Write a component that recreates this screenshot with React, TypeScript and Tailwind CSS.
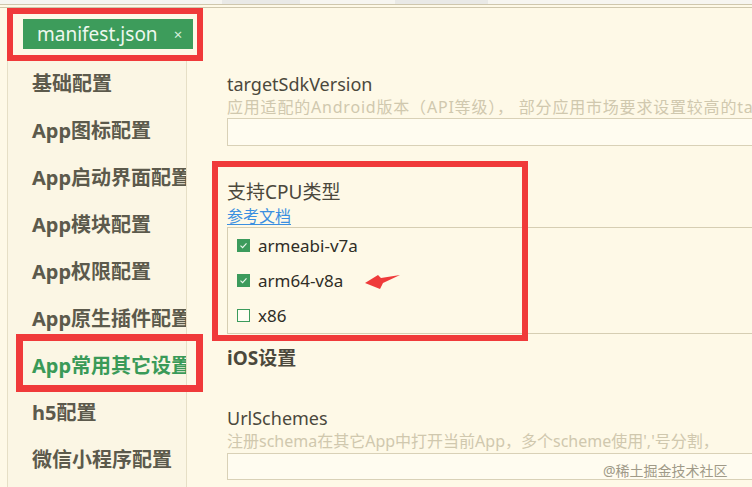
import React from 'react';

const navItems = [
  '基础配置',
  'App图标配置',
  'App启动界面配置',
  'App模块配置',
  'App权限配置',
  'App原生插件配置',
  'App常用其它设置',
  'h5配置',
  '微信小程序配置',
];

const cpuTypes = [
  { name: 'armeabi-v7a', checked: true },
  { name: 'arm64-v8a', checked: true },
  { name: 'x86', checked: false },
];

const Check = ({ checked }: { checked: boolean }) =>
  checked ? (
    <span className="w-[13px] h-[13px] bg-[#3c9b5c] flex items-center justify-center shrink-0">
      <svg width="9" height="9" viewBox="0 0 9 9">
        <path d="M1.5 4.6 L3.6 6.6 L7.5 2.4" fill="none" stroke="#e9f6ec" strokeWidth="1.2" />
      </svg>
    </span>
  ) : (
    <span className="w-[13px] h-[13px] border border-[#3c9b5c] bg-[#fffdf3] shrink-0" />
  );

export default function App() {
  return (
    <div
      className="relative w-[752px] h-[487px] overflow-hidden bg-[#fef9e7] text-[#4b483c]"
      style={{ fontFamily: '"Noto Sans", "Noto Sans CJK SC", sans-serif' }}
    >
      {/* top tab strip */}
      <div className="h-[4px] bg-[#f6f5f0] flex">
        <div className="ml-[222px] w-[78px] bg-[#e9e9e6]" />
        <div className="ml-[95px] w-[93px] bg-[#e9e9e6]" />
      </div>
      <div className="h-[4px] border-y border-[#cfc7ad]" />

      {/* file tab row */}
      <div className="h-[52px] pt-[11px] pl-[23px]">
        <div className="w-[170px] h-[30px] bg-[#3d9c5b] flex items-center pl-[14px] text-[#eef8ef]">
          <span className="text-[19px] leading-none">manifest.json</span>
          <span className="ml-[16px] text-[15px] leading-none text-[#d6efdb]">×</span>
        </div>
      </div>

      <div className="flex">
        {/* sidebar */}
        <div className="ml-[7px] w-[180px] shrink-0 border-l border-r border-[#e6dfc6] bg-[#fbf6e4] h-[430px] overflow-hidden">
          {navItems.map((item) => (
            <div
              key={item}
              className={`h-[47px] flex items-center pl-[24px] whitespace-nowrap text-[20px] font-bold ${
                item === 'App常用其它设置' ? 'text-[#3a9a58]' : 'text-[#5c5a4c]'
              }`}
            >
              {item}
            </div>
          ))}
        </div>

        {/* main */}
        <div className="flex-1 min-w-0 overflow-hidden pl-[40px] pt-[12px] whitespace-nowrap">
          <div className="text-[18px] leading-[24px]">targetSdkVersion</div>
          <div className="text-[16px] leading-[22px] tracking-[0.8px] text-[#d0c8ae]">
            应用适配的Android版本（API等级）， 部分应用市场要求设置较高的targetSdkVersion
          </div>
          <div className="h-[28px] border-y border-l border-[#d9d1b7] bg-[#fffcf0]" />

          <div className="mt-[33px] text-[19px] leading-[26px]">支持CPU类型</div>
          <div className="text-[16px] leading-[22px] text-[#3a8fe0] underline underline-offset-2">参考文档</div>
          <div className="border-y border-l border-[#d6ceb3] pl-[9px]">
            {cpuTypes.map((c) => (
              <div key={c.name} className="h-[35px] flex items-center gap-[8px]">
                <Check checked={c.checked} />
                <span className="text-[17px] text-[#2f2d26]">{c.name}</span>
              </div>
            ))}
          </div>

          <div className="mt-[11px] text-[19px] leading-[26px] font-bold">iOS设置</div>

          <div className="mt-[35px] text-[18px] leading-[24px]">UrlSchemes</div>
          <div className="text-[16px] leading-[22px] text-[#d0c8ae]">
            注册schema在其它App中打开当前App，多个scheme使用','号分割，
          </div>
          <div className="mt-[1px] h-[27px] border-y border-l border-[#d9d1b7] bg-[#fffcf0]" />
        </div>
      </div>

      {/* annotations */}
      <div className="absolute left-[7px] top-[8px] w-[196px] h-[53px] border-[6px] border-[#f03a3a]" />
      <div className="absolute left-[16px] top-[334px] w-[187px] h-[58px] border-[7px] border-[#f03a3a]" />
      <div className="absolute left-[212px] top-[161px] w-[316px] h-[180px] border-[6px] border-[#f03a3a]" />
      <svg className="absolute left-[360px] top-[270px]" width="45" height="24" viewBox="0 0 45 24">
        <polygon points="5,13 18,5 21,8 40,5 23,13 20,19" fill="#ef3b3b" />
      </svg>
      <div className="absolute left-[603px] top-[460px] text-[14px] text-[#a09a88] whitespace-nowrap">
        @稀土掘金技术社区
      </div>
    </div>
  );
}
